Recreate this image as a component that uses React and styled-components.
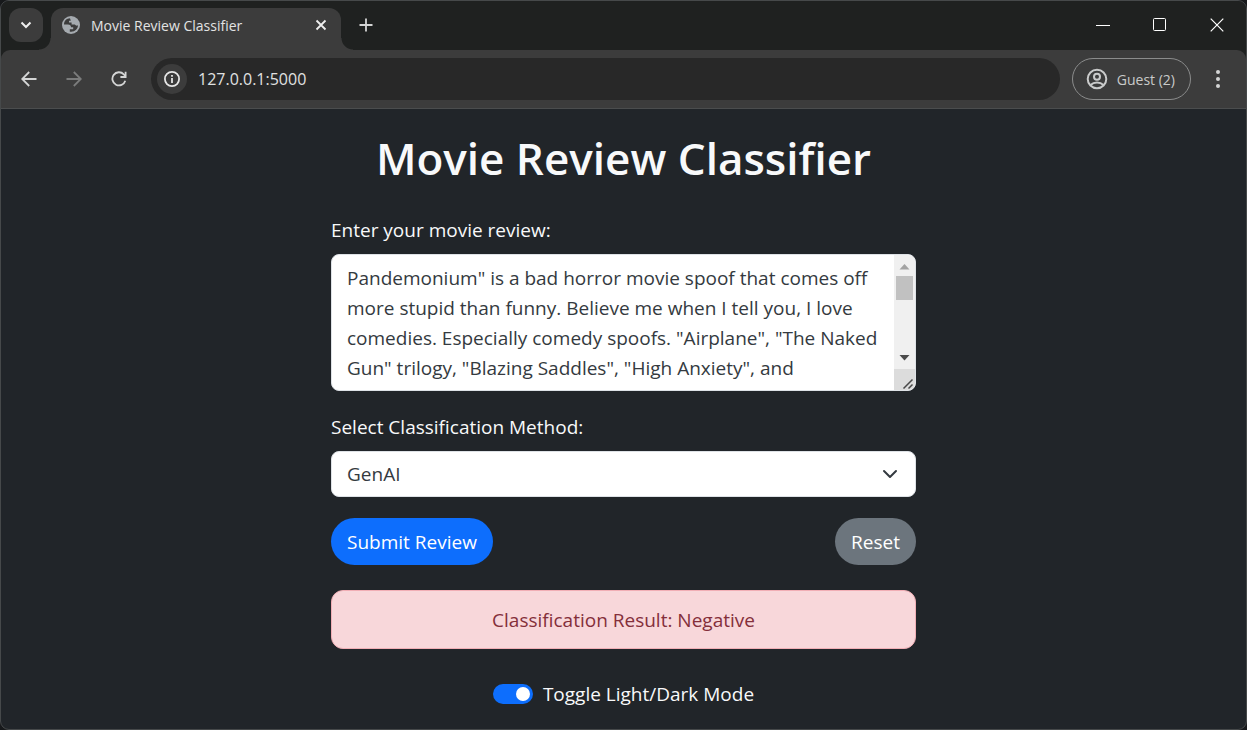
import React, { useState } from "react";
import styled, { createGlobalStyle } from "styled-components";

const GlobalStyle = createGlobalStyle`
  * { box-sizing: border-box; }
  body {
    margin: 0;
    background: #17191b;
    font-family: "Segoe UI", "Open Sans", "Noto Sans", sans-serif;
  }
  button, input, textarea, select { font: inherit; margin: 0; }
`;

const BrowserWindow = styled.div`
  display: flex;
  flex-direction: column;
  min-height: 100vh;
  border: 1px solid #46494a;
  border-radius: 9px;
  background: #212529;
  overflow: hidden;
`;

const TabStrip = styled.header`
  display: flex;
  align-items: flex-start;
  height: 49px;
  padding: 7px 0 0 8px;
`;

const IconButton = styled.button`
  display: flex;
  align-items: center;
  justify-content: center;
  flex: none;
  width: ${(p) => p.$width || 34}px;
  height: 34px;
  padding: 0;
  border: 0;
  border-radius: ${(p) => p.$radius || 17}px;
  background: ${(p) => p.$fill || "transparent"};
  color: ${(p) => p.$color || "#d4d5d5"};
`;

const Tab = styled.div`
  position: relative;
  display: flex;
  align-items: center;
  gap: 11px;
  width: 290px;
  height: 42px;
  margin-left: 8px;
  padding: 0 3px 8px 11px;
  border-radius: 12px 12px 0 0;
  background: #3c3c3c;
  color: #e2e3e3;
  font-size: 14px;

  &::before, &::after {
    content: "";
    position: absolute;
    bottom: 0;
    width: 12px;
    height: 12px;
  }
  &::before {
    right: 100%;
    background: radial-gradient(circle at 0 0, transparent 11px, #3c3c3c 12px);
  }
  &::after {
    left: 100%;
    background: radial-gradient(circle at 100% 0, transparent 11px, #3c3c3c 12px);
  }
`;

const TabTitle = styled.span`
  flex: 1;
  white-space: nowrap;
`;

const WindowControls = styled.div`
  display: flex;
  margin-left: auto;
`;

const Toolbar = styled.nav`
  display: flex;
  align-items: center;
  height: 59px;
  padding: 0 11px;
  border-bottom: 1px solid #4b4d4e;
  border-radius: 9px 9px 0 0;
  background: #3c3c3c;
`;

const Chrome = styled.div`
  background: #1f2120;
`;

const NavButtons = styled.div`
  display: flex;
  gap: 11px;
`;

const AddressBar = styled.div`
  display: flex;
  flex: 1;
  align-items: center;
  gap: 11px;
  height: 42px;
  margin: 0 12px 0 15px;
  padding: 0 6px;
  border-radius: 21px;
  background: #282828;
`;

const SiteInfo = styled(IconButton)`
  width: 30px;
  height: 30px;
`;

const AddressInput = styled.input`
  flex: 1;
  min-width: 0;
  padding: 0;
  border: 0;
  outline: 0;
  background: transparent;
  color: #e0e1e1;
  font-size: 16px;
`;

const ProfileButton = styled.button`
  display: flex;
  align-items: center;
  gap: 9px;
  height: 42px;
  margin-right: 10px;
  padding: 0 15px 0 13px;
  border: 1px solid #8b8c8c;
  border-radius: 21px;
  background: transparent;
  color: #c9caca;
  font-size: 14px;
  white-space: nowrap;
`;

const Page = styled.main`
  flex: 1;
  display: flex;
  justify-content: center;
  padding: 22px 20px 18px;
  color: #f8f9fa;
  font-size: 19px;
  line-height: 30px;
`;

const ReviewForm = styled.form`
  display: flex;
  flex-direction: column;
  width: 100%;
  max-width: 585px;
`;

const Title = styled.h1`
  margin: 0 0 30px;
  font-size: 44px;
  font-weight: 600;
  line-height: 54px;
  text-align: center;
  white-space: nowrap;
`;

const Field = styled.div`
  display: flex;
  flex-direction: column;
  gap: 9px;
  margin-bottom: 21px;
`;

const Label = styled.label`
  color: #f8f9fa;
`;

const TextBox = styled.div`
  display: flex;
  height: 137px;
  border: 1px solid #dee2e6;
  border-radius: 8px;
  background: #fff;
  overflow: hidden;
`;

const ReviewText = styled.textarea`
  flex: 1;
  min-width: 0;
  padding: 8px 0 7px 15px;
  border: 0;
  outline: 0;
  resize: none;
  overflow: hidden;
  background: transparent;
  color: #343a40;
  line-height: 30px;
`;

const ScrollTrack = styled.div`
  display: flex;
  flex-direction: column;
  align-items: center;
  width: 21px;
  background: #f0f0f0;
`;

const ScrollThumb = styled.div`
  width: 17px;
  height: 24px;
  margin-bottom: auto;
  background: #c1c1c1;
`;

const SelectWrap = styled.div`
  display: grid;
  align-items: center;
  > * { grid-area: 1 / 1; }
  > svg {
    justify-self: end;
    margin-right: 17px;
    pointer-events: none;
  }
`;

const Select = styled.select`
  appearance: none;
  width: 100%;
  height: 46px;
  padding: 0 48px 0 15px;
  border: 1px solid #dee2e6;
  border-radius: 8px;
  background: #fff;
  color: #343a40;
`;

const Actions = styled.div`
  display: flex;
  justify-content: space-between;
  margin-bottom: 25px;
`;

const PillButton = styled.button`
  height: 47px;
  padding: 0 16px;
  border: 0;
  border-radius: 24px;
  background: ${(p) => (p.$primary ? "#0d6efd" : "#6c757d")};
  color: #fff;
`;

const Result = styled.output`
  display: block;
  margin-bottom: 30px;
  padding: 14px 16px 12px;
  border: 1px solid #f1aeb5;
  border-radius: 12px;
  background: #f8d7da;
  color: #842f3a;
  line-height: 31px;
  text-align: center;
`;

const ModeSwitch = styled.div`
  display: flex;
  align-items: center;
  justify-content: center;
  gap: 10px;
`;

const SwitchInput = styled.input`
  appearance: none;
  width: 40px;
  height: 20px;
  border-radius: 10px;
  background: ${(p) => (p.checked ? "#0d6efd" : "#6c757d")};
  display: flex;
  align-items: center;
  justify-content: ${(p) => (p.checked ? "flex-end" : "flex-start")};
  padding: 0 3px;
  &::before {
    content: "";
    width: 14px;
    height: 14px;
    border-radius: 50%;
    background: #fff;
  }
`;

function Icon({ size, box = size, stroke = 2, children }) {
  return (
    <svg width={size} height={size} viewBox={`0 0 ${box} ${box}`} fill="none"
      stroke="currentColor" strokeWidth={stroke} aria-hidden="true">
      {children}
    </svg>
  );
}

const REVIEW =
  'Pandemonium" is a bad horror movie spoof that comes off more stupid than funny. Believe me when I tell you, I love comedies. Especially comedy spoofs. "Airplane", "The Naked Gun" trilogy, "Blazing Saddles", "High Anxiety", and';

export default function App() {
  const [review, setReview] = useState(REVIEW);
  const [dark, setDark] = useState(true);
  return (
    <>
      <GlobalStyle />
      <BrowserWindow>
        <Chrome>
          <TabStrip>
            <IconButton $fill="#3c3c3c" $radius={12} $color="#eeeeee" aria-label="Search tabs">
              <Icon size={12}><path d="M1.5 3.5 6 8l4.500-4.500" /></Icon>
            </IconButton>
            <Tab>
              <svg width="18" height="18" viewBox="0 0 18 18" aria-hidden="true">
                <circle cx="9" cy="9" r="9" fill="#a5aaaf" />
                <path d="M8 2.200 C4.500 2.300 2 5 2 8.500 H6 C8 8.500 9 9.700 9 11.300 H11.200 V13.200 H7.800 V15.700 C12.500 16.500 16 13 16 9.300 C15 10 13.500 9.600 12.800 8.600 H9.600 V6.600 H7 V4.800 H8.800 Z" fill="#3c3c3c" />
              </svg>
              <TabTitle>Movie Review Classifier</TabTitle>
              <IconButton aria-label="Close tab" $color="#eeeeee">
                <Icon size={12} stroke={1.8}><path d="m1.500 1.500 9 9m0-9-9 9" /></Icon>
              </IconButton>
            </Tab>
            <IconButton $width={50} aria-label="New tab">
              <Icon size={14} stroke={1.8}><path d="M7 .5v13M.5 7h13" /></Icon>
            </IconButton>
            <WindowControls>
              <IconButton $width={56} $color="#fff" aria-label="Minimize">
                <Icon size={14} stroke={1}><path d="M0 7.500h14" /></Icon>
              </IconButton>
              <IconButton $width={57} $color="#fff" aria-label="Maximize">
                <Icon size={14} stroke={1}><rect x=".5" y=".5" width="12" height="12" rx="1" /></Icon>
              </IconButton>
              <IconButton $width={58} $color="#fff" aria-label="Close window">
                <Icon size={14} stroke={1.2}><path d="m.7.7 12.600 12.600m0-12.600L.7 13.300" /></Icon>
              </IconButton>
            </WindowControls>
          </TabStrip>
          <Toolbar>
            <NavButtons>
              <IconButton aria-label="Back">
                <Icon size={16} stroke={1.8}><path d="M15.500 8H1.500M8.200 1 1.200 8l7 7" /></Icon>
              </IconButton>
              <IconButton $color="#7b7c7c" aria-label="Forward">
                <Icon size={16} stroke={1.8}><path d="M.5 8h14M7.800 1l7 7-7 7" /></Icon>
              </IconButton>
              <IconButton aria-label="Reload">
                <Icon size={16} stroke={1.8}>
                  <path d="M14.300 9.800A6.600 6.600 0 1 1 12.800 3.300L14.600 5.200" />
                  <path d="M14.600.8v5.200H9.400" />
                </Icon>
              </IconButton>
            </NavButtons>
            <AddressBar>
              <SiteInfo $fill="#3c3c3c" $color="#e6e6e6" type="button" aria-label="Site information">
                <Icon size={16} stroke={1.8}>
                  <circle cx="8" cy="8" r="7.100" />
                  <path d="M8 7v5M8 4v1.800" />
                </Icon>
              </SiteInfo>
              <AddressInput aria-label="Address" defaultValue="127.0.0.1:5000" />
            </AddressBar>
            <ProfileButton>
              <Icon size={22}>
                <circle cx="11" cy="11" r="9.300" />
                <circle cx="11" cy="8.700" r="3" />
                <path d="M4.500 17c3.600-3.300 9.400-3.300 13 0" />
              </Icon>
              Guest (2)
            </ProfileButton>
            <IconButton aria-label="Menu">
              <svg width="4" height="18" viewBox="0 0 4 18" fill="currentColor" aria-hidden="true">
                <circle cx="2" cy="2" r="2" /><circle cx="2" cy="9" r="2" /><circle cx="2" cy="16" r="2" />
              </svg>
            </IconButton>
          </Toolbar>
        </Chrome>
        <Page>
          <ReviewForm onSubmit={(e) => e.preventDefault()}>
            <Title>Movie Review Classifier</Title>
            <Field>
              <Label htmlFor="review">Enter your movie review:</Label>
              <TextBox>
                <ReviewText id="review" spellCheck={false} value={review} onChange={(e) => setReview(e.target.value)} />
                <ScrollTrack aria-hidden="true">
                  <svg width="21" height="21" viewBox="0 0 21 21"><path d="M5.500 14.500 10.500 9l5 5.500z" fill="#a3a3a3" /></svg>
                  <ScrollThumb />
                  <svg width="21" height="21" viewBox="0 0 21 21"><path d="M5.500 7 10.500 12.500 15.500 7z" fill="#4b4b4b" /></svg>
                  <svg width="21" height="21" viewBox="0 0 21 21">
                    <path d="M0 0h21v21H0z" fill="#dcdcdc" />
                    <path d="m9.500 19.500 9-9M14.500 19.500l4-4" stroke="#484848" strokeWidth="1.500" />
                  </svg>
                </ScrollTrack>
              </TextBox>
            </Field>
            <Field>
              <Label htmlFor="method">Select Classification Method:</Label>
              <SelectWrap>
                <Select id="method" defaultValue="GenAI"><option>GenAI</option></Select>
                <Icon size={18}><path d="m3 6 6 6 6-6" stroke="#343a40" strokeLinecap="round" strokeLinejoin="round" /></Icon>
              </SelectWrap>
            </Field>
            <Actions>
              <PillButton $primary type="submit">Submit Review</PillButton>
              <PillButton type="button" onClick={() => setReview("")}>Reset</PillButton>
            </Actions>
            <Result>Classification Result: Negative</Result>
            <ModeSwitch>
              <SwitchInput id="mode" type="checkbox" role="switch" checked={dark} onChange={() => setDark(!dark)} />
              <Label htmlFor="mode">Toggle Light/Dark Mode</Label>
            </ModeSwitch>
          </ReviewForm>
        </Page>
      </BrowserWindow>
    </>
  );
}
